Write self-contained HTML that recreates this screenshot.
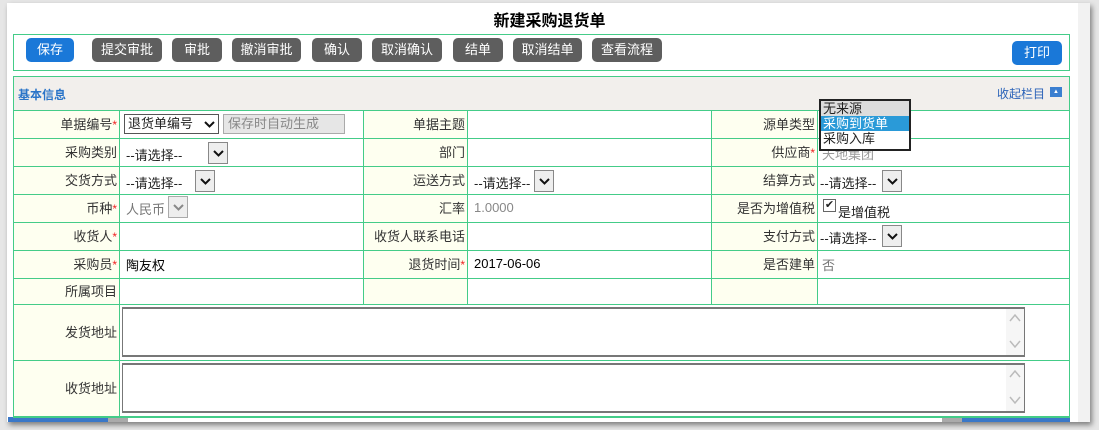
<!DOCTYPE html>
<html><head><meta charset="utf-8"><style>
*{margin:0;padding:0;box-sizing:border-box}
body{width:1099px;height:430px;background:#e6e6e6;font-family:"Liberation Sans","Noto Sans CJK SC",sans-serif;font-size:13px;color:#222;position:relative;overflow:hidden}
.panel{position:absolute;left:7px;top:3px;width:1083px;height:419px;background:#fff;box-shadow:2px 3px 5px rgba(0,0,0,.45);overflow:hidden}
.rstrip{position:absolute;left:1071px;top:0;width:19px;height:419px;background:#f2f2f2}
.a{position:absolute}
.title{position:absolute;left:0;width:1099px;top:7px;text-align:center;font-size:16px;font-weight:bold;color:#000}
.box{position:absolute;border:1px solid #44cc88}
.btn{position:absolute;top:38px;height:24px;line-height:24px;border-radius:5px;background:#5e5e5e;color:#fff;text-align:center;font-size:13px}
.blue{background:#1a78d8}
.cell{position:absolute;border-right:1px solid #44cc88;border-bottom:1px solid #44cc88}
.lab{background:#fefff0;text-align:right;padding-right:2px;color:#333}
.req{color:#e22;font-size:12px}
.sel{position:absolute;width:20px;height:22px;border:1px solid #888;background:#eee}
.sel svg{position:absolute;left:4px;top:7px}
.ta{position:absolute;left:122px;width:903px;height:50px;border:2px solid #777;border-width:2px 1px 2px 1px;background:#fff}
.ta .sb{position:absolute;right:0;top:0;width:18px;height:100%;background:#f6f6f6}
</style></head><body>
<div class="panel"><div class="rstrip"></div>
<div class="a" style="left:1px;top:414px;width:100px;height:5px;background:#3a78c8"></div>
<div class="a" style="left:101px;top:414px;width:20px;height:5px;background:#aaa"></div>
<div class="a" style="left:935px;top:414px;width:20px;height:5px;background:#aaa"></div>
<div class="a" style="left:955px;top:414px;width:108px;height:5px;background:#3a78c8"></div>
</div>
<div class="title">新建采购退货单</div>
<div class="box" style="left:13px;top:34px;width:1057px;height:37px"></div>
<div class="btn blue" style="left:26px;width:48px">保存</div>
<div class="btn" style="left:92px;width:70px">提交审批</div>
<div class="btn" style="left:172px;width:50px">审批</div>
<div class="btn" style="left:232px;width:69px">撤消审批</div>
<div class="btn" style="left:312px;width:50px">确认</div>
<div class="btn" style="left:372px;width:70px">取消确认</div>
<div class="btn" style="left:453px;width:50px">结单</div>
<div class="btn" style="left:513px;width:69px">取消结单</div>
<div class="btn" style="left:592px;width:70px">查看流程</div>
<div class="btn blue" style="left:1012px;top:41px;width:50px">打印</div>

<div class="box" style="left:13px;top:76px;width:1057px;height:342px;background:#fff"></div>
<div class="a" style="left:14px;top:77px;width:1055px;height:34px;background:#f2efec;border-bottom:1px solid #44cc88"></div>
<div class="a" style="left:18px;top:86px;color:#2a74c8;font-weight:bold;font-size:12px">基本信息</div>
<div class="a" style="left:997px;top:85px;color:#2a62b8;font-size:12px">收起栏目</div>
<div class="a" style="left:1050px;top:87px;width:12px;height:10px;background:#3b7fd0;color:#fff;font-size:6px;text-align:center;line-height:10px">▲</div>

<div id="t"></div>
<script>
var rows=[111,139,167,195,223,251,279,305];
var cols=[13,119,363,467,711,817,1069];
var h='';
var labels=[["单据编号*","单据主题","源单类型"],["采购类别","部门","供应商*"],["交货方式","运送方式","结算方式"],["币种*","汇率","是否为增值税"],["收货人*","收货人联系电话","支付方式"],["采购员*","退货时间*","是否建单"],["所属项目","",""]];
for(var r=0;r<7;r++){for(var c=0;c<6;c++){var x=cols[c],y=rows[r],w=cols[c+1]-x,hh=rows[r+1]-y;var lab=c%2==0;var t='';if(lab){t=labels[r][c/2];t=t.replace('*','<span class="req">*</span>');}
h+='<div class="cell'+(lab?' lab':'')+'" style="left:'+(x+1)+'px;top:'+y+'px;width:'+w+'px;height:'+hh+'px;line-height:'+(hh-1)+'px">'+t+'</div>';}}
h+='<div class="cell lab" style="left:14px;top:305px;width:106px;height:56px;line-height:55px">发货地址</div>';
h+='<div class="cell" style="left:120px;top:305px;width:950px;height:56px"></div>';
h+='<div class="cell lab" style="left:14px;top:361px;width:106px;height:56px;line-height:55px">收货地址</div>';
h+='<div class="cell" style="left:120px;top:361px;width:950px;height:56px"></div>';
document.getElementById('t').innerHTML=h;
</script>
<div class="a" style="left:124px;top:114px;width:95px;height:20px;border:1px solid #555;padding-left:3px;line-height:18px">退货单编号<svg style="position:absolute;right:3px;top:6px" width="11" height="7" viewBox="0 0 11 7"><path d="M1 1 L5.5 5.5 L10 1" fill="none" stroke="#111" stroke-width="2"/></svg></div>
<div class="a" style="left:223px;top:114px;width:122px;height:20px;border:1px solid #aaa;background:#e6e6e6;color:#888;padding-left:4px;line-height:18px">保存时自动生成</div>
<div class="a" style="left:126px;top:145px">--请选择--</div><div class="sel" style="left:208px;top:142px"><svg width="11" height="7" viewBox="0 0 11 7"><path d="M1 1 L5.5 5.5 L10 1" fill="none" stroke="#111" stroke-width="2"/></svg></div>
<div class="a" style="left:126px;top:173px">--请选择--</div><div class="sel" style="left:195px;top:170px"><svg width="11" height="7" viewBox="0 0 11 7"><path d="M1 1 L5.5 5.5 L10 1" fill="none" stroke="#111" stroke-width="2"/></svg></div>
<div class="a" style="left:474px;top:173px">--请选择--</div><div class="sel" style="left:534px;top:170px"><svg width="11" height="7" viewBox="0 0 11 7"><path d="M1 1 L5.5 5.5 L10 1" fill="none" stroke="#111" stroke-width="2"/></svg></div>
<div class="a" style="left:820px;top:173px">--请选择--</div><div class="sel" style="left:882px;top:170px"><svg width="11" height="7" viewBox="0 0 11 7"><path d="M1 1 L5.5 5.5 L10 1" fill="none" stroke="#111" stroke-width="2"/></svg></div>
<div class="a" style="left:126px;top:199px;color:#777">人民币</div><div class="sel" style="left:168px;top:196px;border-color:#aaa"><svg width="11" height="7" viewBox="0 0 11 7"><path d="M1 1 L5.5 5.5 L10 1" fill="none" stroke="#888" stroke-width="2"/></svg></div>
<div class="a" style="left:474px;top:200px;color:#888">1.0000</div>
<div class="a" style="left:823px;top:199px;width:13px;height:13px;border:1px solid #666;font-size:11px;line-height:11px;text-align:center">✔</div>
<div class="a" style="left:838px;top:202px">是增值税</div>
<div class="a" style="left:820px;top:228px">--请选择--</div><div class="sel" style="left:882px;top:225px"><svg width="11" height="7" viewBox="0 0 11 7"><path d="M1 1 L5.5 5.5 L10 1" fill="none" stroke="#111" stroke-width="2"/></svg></div>
<div class="a" style="left:126px;top:255px;color:#000">陶友权</div>
<div class="a" style="left:474px;top:256px;color:#000">2017-06-06</div>
<div class="a" style="left:822px;top:255px;color:#777">否</div>
<div class="a" style="left:822px;top:144px;color:#999">天地集团</div>
<div class="ta" style="top:307px"><div class="sb"><svg width="18" height="46"><path d="M4 12 L9 6 L14 12 M4 32 L9 38 L14 32" fill="none" stroke="#bbb" stroke-width="1.5"/></svg></div></div>
<div class="ta" style="top:363px"><div class="sb"><svg width="18" height="46"><path d="M4 12 L9 6 L14 12 M4 32 L9 38 L14 32" fill="none" stroke="#bbb" stroke-width="1.5"/></svg></div></div>
<div class="a" style="left:819px;top:99px;width:92px;height:52px;border:2px solid #222;background:#fff;font-size:13px;line-height:15px">
<div style="background:#ddd;padding-left:2px">无来源</div>
<div style="background:#2a9ad8;color:#fff;padding-left:2px">采购到货单</div>
<div style="padding-left:2px">采购入库</div></div>
</body></html>
